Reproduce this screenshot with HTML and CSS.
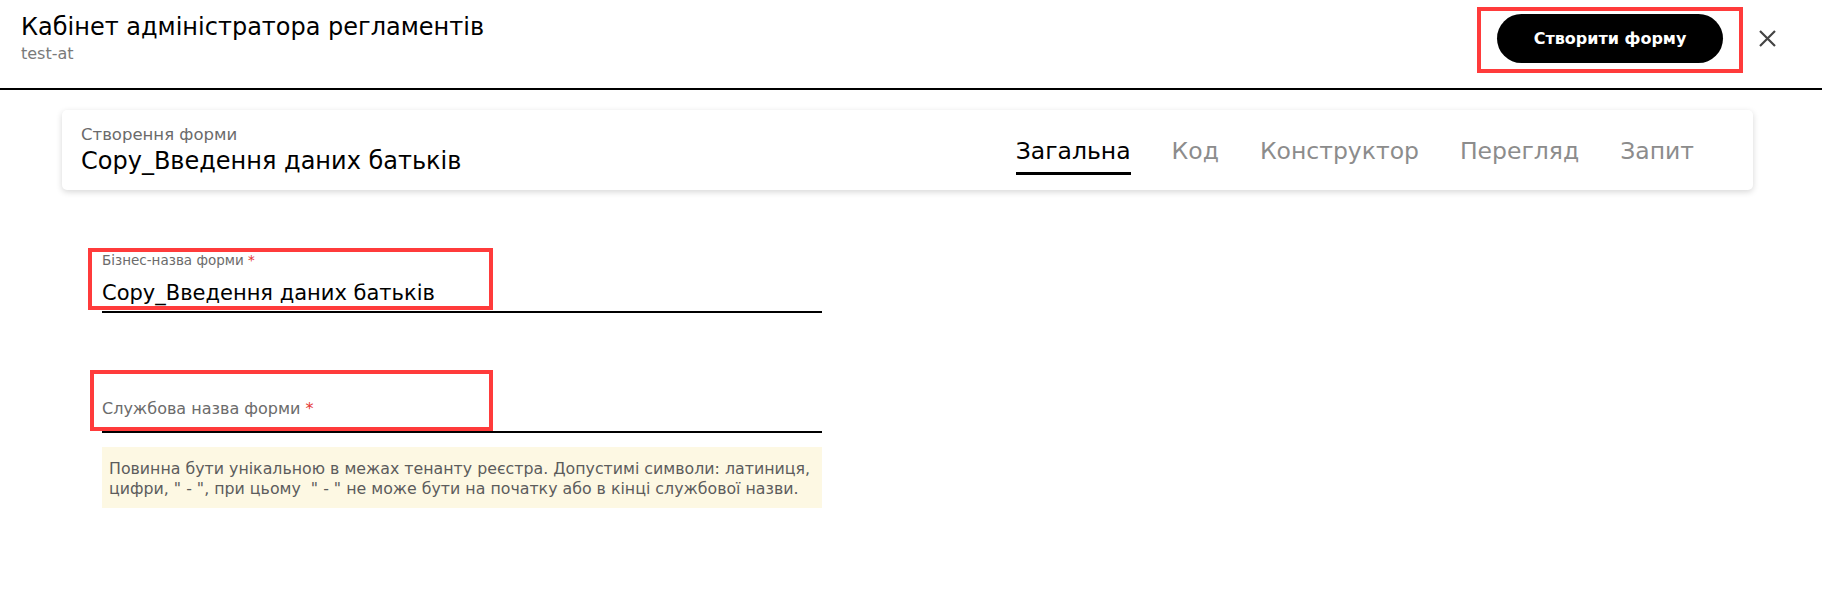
FILE: index.html
```html
<!DOCTYPE html>
<html lang="uk">
<head>
    <meta charset="UTF-8">
    <meta name="viewport" content="width=device-width, initial-scale=1.0">
    <title>Кабінет адміністратора регламентів</title>
    <link rel="stylesheet" href="styles.css">
</head>
<body>
    <header class="top-bar">
        <div class="app-title">
            <h1>Кабінет адміністратора регламентів</h1>
            <p class="tenant">test-at</p>
        </div>
        <div class="top-actions">
            <div class="highlight-wrap">
                <button class="primary-btn">Створити форму</button>
                <span class="highlight highlight-btn"></span>
            </div>
            <button class="close-btn" aria-label="Закрити">
                <svg width="17" height="17" viewBox="0 0 17 17">
                    <path d="M1 1 L16 16 M16 1 L1 16" stroke="#444" stroke-width="2.2" fill="none"/>
                </svg>
            </button>
        </div>
    </header>

    <div class="form-card">
        <div class="form-heading">
            <p class="form-caption">Створення форми</p>
            <h2>Сору_Введення даних батьків</h2>
        </div>
        <nav class="tabs">
            <a class="tab active">Загальна</a>
            <a class="tab">Код</a>
            <a class="tab">Конструктор</a>
            <a class="tab">Перегляд</a>
            <a class="tab">Запит</a>
        </nav>
    </div>

    <main class="form-body">
        <div class="field">
            <label class="field-label">Бізнес-назва форми <span class="req">*</span></label>
            <div class="field-value">Сору_Введення даних батьків</div>
            <span class="highlight highlight-field1"></span>
        </div>

        <div class="field field-empty">
            <div class="field-placeholder">Службова назва форми <span class="req">*</span></div>
            <span class="highlight highlight-field2"></span>
        </div>

        <div class="hint">
            Повинна бути унікальною в межах тенанту реєстра. Допустимі символи: латиниця,<br>
            цифри, " - ", при цьому &nbsp;" - " не може бути на початку або в кінці службової назви.
        </div>
    </main>
</body>
</html>
```

FILE: styles.css
```css
* {
    margin: 0;
    padding: 0;
    box-sizing: border-box;
    font-family: 'DejaVu Sans', Verdana, sans-serif;
}

body {
    background-color: #fff;
    color: #000;
    width: 1822px;
}

.top-bar {
    display: flex;
    justify-content: space-between;
    align-items: flex-start;
    height: 90px;
    padding: 13px 46px 0 21px;
    border-bottom: 2px solid #000;
}

.app-title h1 {
    font-size: 24px;
    font-weight: normal;
    line-height: 28px;
}

.tenant {
    margin-top: 4px;
    font-size: 16px;
    line-height: 18px;
    color: #7a7a7a;
}

.top-actions {
    display: flex;
    align-items: center;
    gap: 36px;
    padding-top: 1px;
}

.highlight-wrap {
    position: relative;
}

.primary-btn {
    width: 226px;
    height: 49px;
    border: none;
    border-radius: 25px;
    background-color: #000;
    color: #fff;
    font-size: 16px;
    font-weight: bold;
    cursor: pointer;
}

.close-btn {
    display: flex;
    border: none;
    background: none;
    cursor: pointer;
}

.highlight {
    position: absolute;
    border: 4px solid #ff3b3b;
    pointer-events: none;
}

.highlight-btn {
    left: -20px;
    top: -7px;
    right: -20px;
    bottom: -10px;
}

.form-card {
    display: flex;
    justify-content: space-between;
    align-items: center;
    height: 80px;
    margin: 20px 69px 0 62px;
    padding: 0 59px 0 19px;
    border-radius: 5px;
    background-color: #fff;
    box-shadow: 0 2px 6px rgba(0, 0, 0, 0.16);
}

.form-caption {
    font-size: 16.5px;
    line-height: 18px;
    color: #6b6b6b;
}

.form-heading h2 {
    margin-top: 3px;
    font-size: 24px;
    font-weight: normal;
    line-height: 28px;
}

.tabs {
    display: flex;
    gap: 41px;
    padding-top: 12px;
}

.tab {
    padding-bottom: 8px;
    border-bottom: 3px solid transparent;
    font-size: 23.5px;
    line-height: 26px;
    color: #8c8c8c;
    cursor: pointer;
}

.tab.active {
    color: #000;
    border-bottom-color: #000;
}

.form-body {
    width: 720px;
    margin: 63px 0 0 102px;
}

.field {
    position: relative;
    border-bottom: 2px solid #000;
}

.field-label {
    display: block;
    font-size: 13.5px;
    line-height: 14px;
    color: #6b6b6b;
}

.req {
    color: #e53935;
}

.field-value {
    margin-top: 12px;
    padding-bottom: 4px;
    font-size: 21px;
    line-height: 28px;
}

.field-empty {
    height: 60px;
    margin-top: 60px;
    display: flex;
    align-items: flex-end;
}

.field-placeholder {
    padding-bottom: 12px;
    font-size: 16px;
    line-height: 20px;
    color: #6b6b6b;
}

.highlight-field1 {
    left: -14px;
    top: -5px;
    width: 405px;
    height: 62px;
}

.highlight-field2 {
    left: -12px;
    top: -3px;
    width: 403px;
    height: 61px;
}

.hint {
    margin-top: 14px;
    padding: 12px 7px 9px;
    background-color: #fdf8e3;
    font-size: 15.8px;
    line-height: 20px;
    color: #5c5c5c;
    white-space: nowrap;
}
```
